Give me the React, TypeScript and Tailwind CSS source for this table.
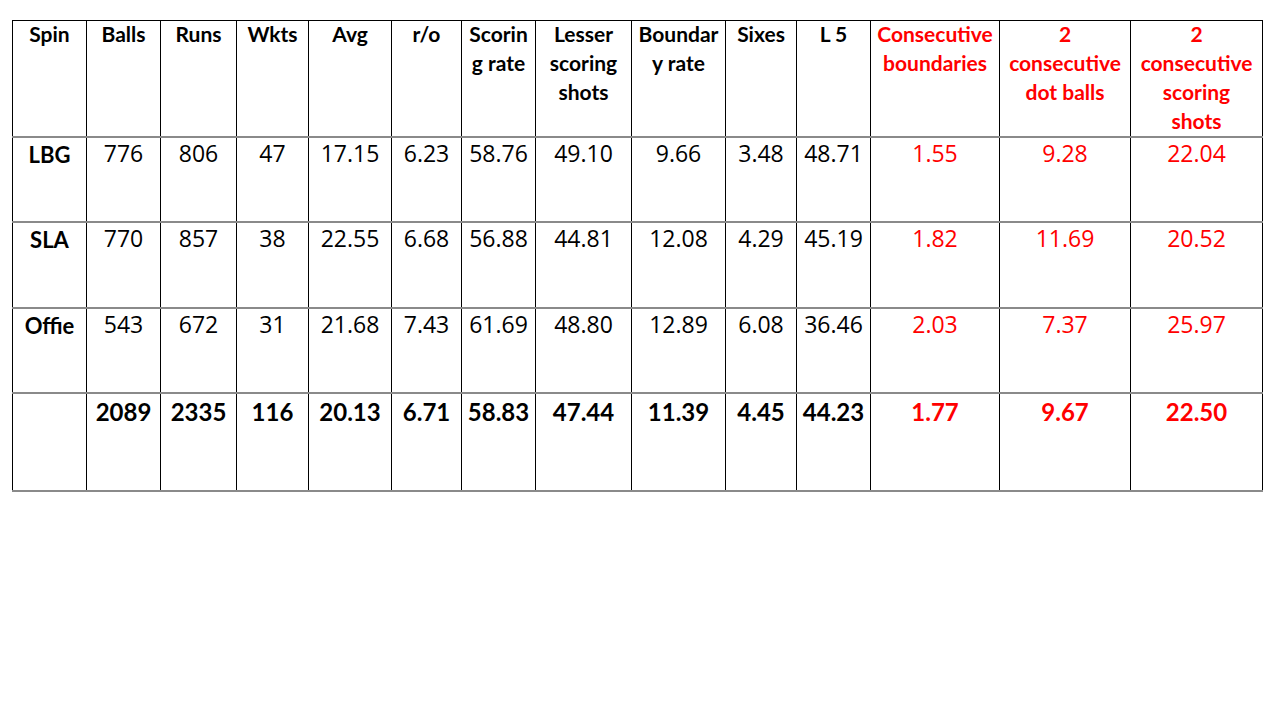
import React from "react";

type Row = {
  label: string;
  values: string[];
  red: string[];
  height: string;
  total?: boolean;
};

const widths = [
  "w-[74px]",
  "w-[74px]",
  "w-[76px]",
  "w-[72px]",
  "w-[83px]",
  "w-[70px]",
  "w-[74px]",
  "w-[96px]",
  "w-[94px]",
  "w-[71px]",
  "w-[74px]",
  "w-[129px]",
  "w-[131px]",
  "w-[132px]",
];

const headers: { lines: string[]; red?: boolean }[] = [
  { lines: ["Spin"] },
  { lines: ["Balls"] },
  { lines: ["Runs"] },
  { lines: ["Wkts"] },
  { lines: ["Avg"] },
  { lines: ["r/o"] },
  { lines: ["Scorin", "g rate"] },
  { lines: ["Lesser", "scoring", "shots"] },
  { lines: ["Boundar", "y rate"] },
  { lines: ["Sixes"] },
  { lines: ["L 5"] },
  { lines: ["Consecutive", "boundaries"], red: true },
  { lines: ["2", "consecutive", "dot balls"], red: true },
  { lines: ["2", "consecutive", "scoring", "shots"], red: true },
];

const rows: Row[] = [
  {
    label: "LBG",
    values: ["776", "806", "47", "17.15", "6.23", "58.76", "49.10", "9.66", "3.48", "48.71"],
    red: ["1.55", "9.28", "22.04"],
    height: "h-[85px]",
  },
  {
    label: "SLA",
    values: ["770", "857", "38", "22.55", "6.68", "56.88", "44.81", "12.08", "4.29", "45.19"],
    red: ["1.82", "11.69", "20.52"],
    height: "h-[86px]",
  },
  {
    label: "Offie",
    values: ["543", "672", "31", "21.68", "7.43", "61.69", "48.80", "12.89", "6.08", "36.46"],
    red: ["2.03", "7.37", "25.97"],
    height: "h-[85px]",
  },
  {
    label: "",
    values: ["2089", "2335", "116", "20.13", "6.71", "58.83", "47.44", "11.39", "4.45", "44.23"],
    red: ["1.77", "9.67", "22.50"],
    height: "h-[98px]",
    total: true,
  },
];

const cell = "border-l border-r border-black p-0 align-top text-center whitespace-nowrap";
const bold = "font-['Lato','Liberation_Sans',sans-serif] font-bold";
const plain = "font-['Open_Sans','DejaVu_Sans',sans-serif] font-normal";

export default function App() {
  return (
    <div className="min-h-[720px] w-[1280px] bg-white pl-[12px] pt-[20px]">
      <table className="table-fixed border-collapse border-t border-black">
        <colgroup>
          {widths.map((w, i) => (
            <col key={i} className={w} />
          ))}
        </colgroup>
        <thead>
          <tr className="h-[116px] border-b-2 border-[#8a8a8a]">
            {headers.map((h, i) => (
              <th
                key={i}
                className={`${cell} ${bold} text-[21px] leading-[29px] ${
                  h.red ? "text-[#ff0000]" : "text-black"
                }`}
              >
                <div className="-mt-[2px]">
                  {h.lines.map((l, j) => (
                    <div key={j}>{l}</div>
                  ))}
                </div>
              </th>
            ))}
          </tr>
        </thead>
        <tbody>
          {rows.map((r, i) => {
            const num = r.total
              ? `${bold} pt-[4px] text-[24px] leading-[28px]`
              : `${plain} text-[23px] leading-[30px]`;
            return (
              <tr key={i} className={`${r.height} border-b-2 border-[#8a8a8a]`}>
                <td className={`${cell} ${bold} pt-[3px] text-[22px] leading-[28px] text-black`}>
                  {r.label}
                </td>
                {r.values.map((v, j) => (
                  <td key={j} className={`${cell} ${num} text-black`}>
                    {v}
                  </td>
                ))}
                {r.red.map((v, j) => (
                  <td key={j} className={`${cell} ${num} text-[#ff0000]`}>
                    {v}
                  </td>
                ))}
              </tr>
            );
          })}
        </tbody>
      </table>
    </div>
  );
}
